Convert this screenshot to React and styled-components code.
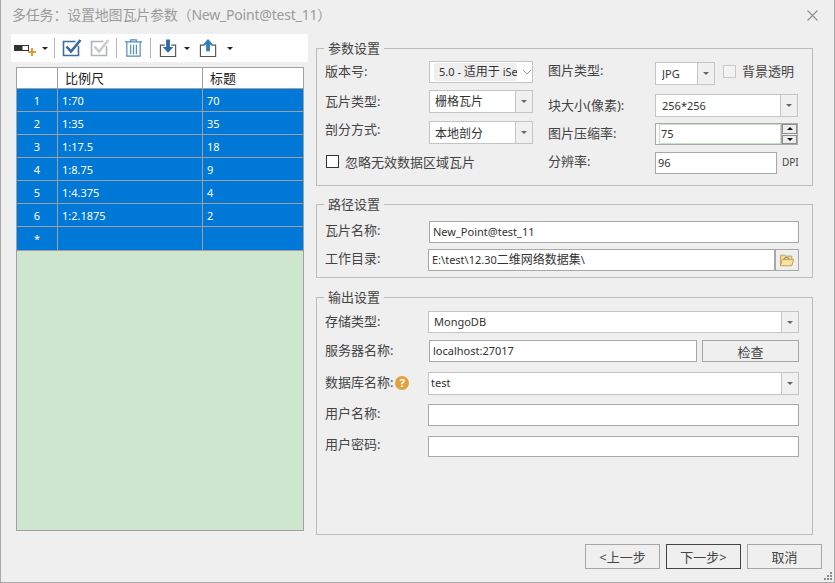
import React from 'react';
import styled, { createGlobalStyle } from 'styled-components';

const GlobalStyle = createGlobalStyle`
  html, body {
    margin: 0;
    padding: 0;
    background: #efefef;
  }
  * {
    box-sizing: border-box;
  }
`;

const Window = styled.div`
  width: 835px;
  height: 583px;
  background: #efefef;
  border: 1px solid #a8a8a8;
  border-top: none;
  position: relative;
  font-family: "Noto Sans", "Noto Sans CJK SC", sans-serif;
  font-size: 12px;
  color: #444;
  overflow: hidden;
`;

const TitleBar = styled.div`
  height: 33px;
  padding: 5px 15px 0 11px;
  display: flex;
  justify-content: space-between;
  align-items: flex-start;
`;

const Title = styled.div`
  font-size: 14px;
  line-height: 20px;
  letter-spacing: -0.2px;
  color: #9b9b9b;
`;

const CloseIcon = styled.svg`
  width: 13px;
  height: 13px;
  margin-top: 4px;
  stroke: #8c8c8c;
  stroke-width: 1.1;
  fill: none;
`;

const Body = styled.div`
  display: flex;
  align-items: flex-start;
`;

const LeftPane = styled.div`
  width: 315px;
  padding: 1px 0 0 10px;
`;

const Toolbar = styled.div`
  width: 297px;
  height: 28px;
  background: #fff;
  border-radius: 2px;
  display: flex;
  align-items: center;
  padding-left: 3px;
`;

const ToolIcon = styled.svg`
  width: ${(p) => p.$w || 20}px;
  height: 22px;
  display: block;
`;

const ToolGap = styled.span`
  width: ${(p) => p.$w}px;
`;

const Caret = styled.span`
  width: 0;
  height: 0;
  border-left: 3px solid transparent;
  border-right: 3px solid transparent;
  border-top: 3px solid #222;
  margin-left: ${(p) => p.$ml || 5}px;
  margin-top: 1px;
`;

const ToolSep = styled.span`
  width: 1px;
  height: 20px;
  background: #b5b5b5;
  margin: 0 ${(p) => p.$r || 7}px 0 ${(p) => p.$l || 7}px;
`;

const Grid = styled.div`
  width: 288px;
  height: 464px;
  margin: 5px 0 0 5px;
  border: 1px solid #a0a0a0;
  background: #cde6cd;
`;

const GridRow = styled.div`
  display: grid;
  grid-template-columns: 40px 145px 1fr;
  height: ${(p) => (p.$head ? 20 : 23)}px;
  background: ${(p) => (p.$head ? '#fff' : '#0078d7')};
  color: ${(p) => (p.$head ? '#222' : '#fff')};
  border-top: ${(p) => (p.$head ? 'none' : '1px solid #a0a0a0')};
  border-bottom: ${(p) => (p.$last ? '1px solid #a0a0a0' : 'none')};
  box-sizing: ${(p) => (p.$last ? 'content-box' : 'border-box')};
`;

const GridCell = styled.div`
  border-left: ${(p) => (p.$first ? 'none' : '1px solid #a0a0a0')};
  padding-left: ${(p) => (p.$center ? 0 : p.$head ? 7 : 4)}px;
  text-align: ${(p) => (p.$center ? 'center' : 'left')};
  line-height: ${(p) => (p.$head ? 20 : 23)}px;
  font-size: ${(p) => (p.$head ? 13 : 11)}px;
  white-space: nowrap;
`;

const RightPane = styled.div`
  width: 497px;
  margin-top: 6px;
`;

const Group = styled.fieldset`
  height: ${(p) => p.$h}px;
  margin: ${(p) => p.$mt || 0}px 0 0;
  padding: 0 13px 0 8px;
  border: 1px solid #bcbcbc;
  min-width: 0;
`;

const Legend = styled.legend`
  margin-left: -1px;
  padding: 0 4px;
  font-size: 13px;
  line-height: 18px;
  color: #444;
`;

const ParamColumns = styled.div`
  display: flex;
  margin-top: 4px;
`;

const ParamColumn = styled.div`
  width: ${(p) => p.$w}px;
  margin-left: ${(p) => p.$ml || 0}px;
  margin-top: ${(p) => p.$mt || 0}px;
`;

const Row = styled.div`
  display: flex;
  align-items: center;
  height: ${(p) => p.$h || 23}px;
  margin-top: ${(p) => p.$mt || 0}px;
`;

const Label = styled.label`
  flex: 0 0 ${(p) => p.$w || 104}px;
  font-size: 13px;
  color: #444;
  white-space: nowrap;
  display: flex;
  align-items: center;
  margin-bottom: ${(p) => (p.$lift || 0) * 2}px;
`;

const Field = styled.div`
  width: ${(p) => (p.$w ? `${p.$w}px` : '100%')};
  flex: ${(p) => (p.$w ? 'none' : 1)};
  min-width: 0;
  height: ${(p) => p.$h || 22}px;
  background: #fff;
  border: 1px solid ${(p) => p.$border || '#b4b4b4'};
  display: flex;
  align-items: center;
  padding-left: ${(p) => p.$pl || 3}px;
  padding-bottom: ${(p) => p.$pb || 0}px;
  font-size: 11px;
  color: #333;
  white-space: nowrap;
  overflow: hidden;
`;

const Cjk = styled.span`
  font-size: 12px;
`;

const FieldText = styled.span`
  flex: 1;
  min-width: 0;
  padding-bottom: ${(p) => p.$pb || 0}px;
  overflow: hidden;
`;

const FocusedText = styled.span`
  flex: 1;
  align-self: stretch;
  border: 1px solid #c6e2c6;
  padding-left: 1px;
  line-height: 18px;
`;

const DropArrow = styled.span`
  flex: 0 0 17px;
  align-self: stretch;
  background: #f0f0f0;
  border-left: 1px solid #c4c4c4;
  display: flex;
  align-items: center;
  justify-content: center;
  &::after {
    content: '';
    border-left: 3px solid transparent;
    border-right: 3px solid transparent;
    border-top: 3px solid #666;
  }
`;

const DisabledText = styled.span`
  background: #efefef;
  align-self: stretch;
  margin: 1px 0 1px 1px;
  padding-left: 5px;
  width: 83px;
  line-height: 18px;
  overflow: hidden;
`;

const Chevron = styled.svg`
  width: 10px;
  height: 6px;
  margin-left: 5px;
  stroke: #9a9a9a;
  fill: none;
`;

const Spinner = styled.div`
  flex: 0 0 16px;
  align-self: stretch;
  background: #ececec;
  border-left: 1px solid #a8a8a8;
  display: flex;
  flex-direction: column;
`;

const SpinPart = styled.span`
  flex: 1;
  border: 1px solid #8f8f8f;
  margin: ${(p) => (p.$down ? '0' : '0 0 1px')};
  display: flex;
  align-items: center;
  justify-content: center;
  &::after {
    content: '';
    border-left: 3px solid transparent;
    border-right: 3px solid transparent;
    ${(p) => (p.$down ? 'border-top: 3px solid #111;' : 'border-bottom: 3px solid #111;')}
  }
`;

const Box = styled.span`
  width: 13px;
  height: 13px;
  background: ${(p) => (p.$muted ? '#f3f3f3' : '#fff')};
  border: 1px solid ${(p) => (p.$muted ? '#c8c8c8' : '#333')};
  flex: none;
  margin-left: ${(p) => p.$ml || 0}px;
  margin-bottom: ${(p) => (p.$lift || 0) * 2}px;
`;

const CheckText = styled.span`
  font-size: 13px;
  margin-left: ${(p) => p.$ml || 6}px;
  margin-bottom: ${(p) => (p.$lift || 0) * 2}px;
  color: #444;
`;

const Unit = styled.span`
  font-size: 10px;
  margin: 0 0 3px 5px;
  color: #444;
`;

const GroupBody = styled.div`
  margin-top: ${(p) => p.$mt || 0}px;
`;

const Button = styled.button`
  width: ${(p) => p.$w || 75}px;
  height: ${(p) => p.$h || 25}px;
  margin-left: ${(p) => p.$ml || 0}px;
  background: #efefef;
  border: 1px solid ${(p) => (p.$primary ? '#444' : '#a6a6a6')};
  font-family: inherit;
  font-size: 13px;
  color: #444;
  padding: 0;
`;

const FolderButton = styled.span`
  width: 24px;
  height: 22px;
  border: 1px solid #a8a8a8;
  display: flex;
  align-items: center;
  justify-content: center;
  flex: none;
`;

const HelpDot = styled.span`
  width: 14px;
  height: 14px;
  margin: 2px 0 0 2px;
  border-radius: 50%;
  background: #e0a33a;
  color: #fff;
  font-size: 11px;
  font-weight: 700;
  line-height: 14px;
  text-align: center;
`;

const Footer = styled.div`
  display: flex;
  justify-content: flex-end;
  padding-right: 12px;
  margin-top: 9px;
`;

const Grip = styled.svg`
  position: absolute;
  right: 1px;
  bottom: 1px;
  width: 9px;
  height: 9px;
  fill: #8a8a8a;
`;

const rows = [
  ['1', '1:70', '70'],
  ['2', '1:35', '35'],
  ['3', '1:17.5', '18'],
  ['4', '1:8.75', '9'],
  ['5', '1:4.375', '4'],
  ['6', '1:2.1875', '2'],
  ['*', '', ''],
];

const CheckAll = ({ color, box }) => (
  <ToolIcon viewBox="0 0 20 22" $w={20}>
    <path d="M13.5 4.5H1.5v14h15V9" fill="none" stroke={box} strokeWidth="1.6" />
    <path d="M4.5 9.5l4.5 5L18.5 3" fill="none" stroke={color} strokeWidth="2.6" />
  </ToolIcon>
);

const Trash = () => (
  <ToolIcon viewBox="0 0 20 22" $w={19}>
    <path d="M1 4.5h18M7 4.5V2.5h6v2M3 4.5v15h14v-15M7 7.5v10M10 7.5v10M13 7.5v10" fill="none" stroke="#4a8ac0" strokeWidth="1.2" />
  </ToolIcon>
);

const TrayArrow = ({ up }) => (
  <ToolIcon viewBox="0 0 20 22" $w={19}>
    <path d="M6 8H1.5v12h16V8H13" fill="none" stroke="#555" strokeWidth="1.2" />
    {up ? (
      <path d="M9.5 1.5l5.5 6h-3.5v7h-4v-7H4z" fill="#2f7ec0" />
    ) : (
      <path d="M9.5 16l5.5-6h-3.5V2h-4v8H4z" fill="#2f6aa8" />
    )}
  </ToolIcon>
);

const AddField = () => (
  <ToolIcon viewBox="0 0 24 22" $w={24}>
    <rect x="0.5" y="8.5" width="14" height="5" fill="#fff" stroke="#333" strokeWidth="1" />
    <rect x="0.5" y="8.5" width="8" height="5" fill="#333" />
    <path d="M18 11v8M14 15h8" stroke="#e8973a" strokeWidth="2" />
  </ToolIcon>
);

const FolderIcon = () => (
  <svg width="16" height="14" viewBox="0 0 17 16">
    <path d="M1 2.5h5l1 1h7v10H1z" fill="#f6d98c" stroke="#b99a52" strokeWidth="1" />
    <path d="M1 14.5l2-7h13l-2 7z" fill="#fae39f" stroke="#b99a52" strokeWidth="1" />
    <path d="M5 6.5c1.5-2 4-2 6 0" fill="none" stroke="#4a6fa5" strokeWidth="1" />
  </svg>
);

const ComboBox = ({ w, h, text, pl, pb }) => (
  <Field $w={w} $h={h} $border="#c4c4c4" $pl={pl || 5}>
    <FieldText $pb={pb}>{text}</FieldText>
    <DropArrow />
  </Field>
);

export default function App() {
  return (
    <>
      <GlobalStyle />
      <Window>
        <TitleBar>
          <Title>多任务：设置地图瓦片参数（New_Point@test_11）</Title>
          <CloseIcon viewBox="0 0 13 13">
            <path d="M1.5 1.5l10 10M11.5 1.5l-10 10" />
          </CloseIcon>
        </TitleBar>
        <Body>
          <LeftPane>
            <Toolbar>
              <AddField />
              <Caret $ml={4} />
              <ToolSep $l={6} $r={7} />
              <CheckAll color="#2f6aa8" box="#3a6f9e" />
              <ToolGap $w={8} />
              <CheckAll color="#c8ccd0" box="#b0b4b8" />
              <ToolSep $l={6} $r={7} />
              <Trash />
              <ToolSep $l={7} $r={8} />
              <TrayArrow />
              <Caret $ml={6} />
              <ToolGap $w={9} />
              <TrayArrow up />
              <Caret $ml={9} />
            </Toolbar>
            <Grid>
              <GridRow $head>
                <GridCell $first $head />
                <GridCell $head>比例尺</GridCell>
                <GridCell $head>标题</GridCell>
              </GridRow>
              {rows.map(([no, scale, title], i) => (
                <GridRow key={no} $last={i === rows.length - 1}>
                  <GridCell $first $center>{no}</GridCell>
                  <GridCell>{scale}</GridCell>
                  <GridCell>{title}</GridCell>
                </GridRow>
              ))}
            </Grid>
          </LeftPane>
          <RightPane>
            <Group $h={147}>
              <Legend>参数设置</Legend>
              <ParamColumns>
                <ParamColumn $w={208}>
                  <Row $h={22}>
                    <Label $lift={2}>版本号:</Label>
                    <Field $w={104} $border="#c4c4c4" $pl={0}>
                      <DisabledText>5.0 - <Cjk>适用于</Cjk> iSe</DisabledText>
                      <Chevron viewBox="0 0 10 6"><path d="M1 1l4 4 4-4" /></Chevron>
                    </Field>
                  </Row>
                  <Row $mt={7}>
                    <Label $lift={1}>瓦片类型:</Label>
                    <ComboBox w={104} h={23} pb={2} text={<Cjk>栅格瓦片</Cjk>} />
                  </Row>
                  <Row $mt={8}>
                    <Label $lift={4}>剖分方式:</Label>
                    <ComboBox w={104} h={23} text={<Cjk>本地剖分</Cjk>} />
                  </Row>
                  <Row $mt={6} $h={22}>
                    <Box $ml={1} />
                    <CheckText>忽略无效数据区域瓦片</CheckText>
                  </Row>
                </ParamColumn>
                <ParamColumn $w={250} $ml={15} $mt={1}>
                  <Row>
                    <Label $w={107} $lift={4}>图片类型:</Label>
                    <ComboBox w={60} h={23} text="JPG" pl={6} />
                    <Box $muted $ml={8} $lift={2} />
                    <CheckText $ml={6} $lift={3}>背景透明</CheckText>
                  </Row>
                  <Row $mt={9}>
                    <Label $w={107} $lift={1}>块大小(像素):</Label>
                    <ComboBox w={143} h={23} text="256*256" pl={6} />
                  </Row>
                  <Row $mt={6} $h={22}>
                    <Label $w={107} $lift={2}>图片压缩率:</Label>
                    <Field $w={143} $border="#a8a8a8" $pl={0}>
                      <FocusedText>75</FocusedText>
                      <Spinner>
                        <SpinPart />
                        <SpinPart $down />
                      </Spinner>
                    </Field>
                  </Row>
                  <Row $mt={7} $h={22}>
                    <Label $w={107} $lift={3}>分辨率:</Label>
                    <Field $w={122} $border="#a8a8a8" $pl={2} $pb={2}>96</Field>
                    <Unit>DPI</Unit>
                  </Row>
                </ParamColumn>
              </ParamColumns>
            </Group>
            <Group $h={83} $mt={9}>
              <Legend>路径设置</Legend>
              <GroupBody $mt={8}>
                <Row $h={22}>
                  <Label $lift={3}>瓦片名称:</Label>
                  <Field $border="#a8a8a8" $pb={2}>New_Point@test_11</Field>
                </Row>
                <Row $h={22} $mt={6}>
                  <Label $w={103} $lift={3}>工作目录:</Label>
                  <Field $border="#a8a8a8" $pb={2}>E:\test\12.30<Cjk>二维网络数据集</Cjk>\</Field>
                  <FolderButton><FolderIcon /></FolderButton>
                </Row>
              </GroupBody>
            </Group>
            <Group $h={247} $mt={10}>
              <Legend>输出设置</Legend>
              <GroupBody $mt={5}>
                <Row $h={22}>
                  <Label $w={103} $lift={2}>存储类型:</Label>
                  <ComboBox text="MongoDB" pl={5} pb={2} />
                </Row>
                <Row $h={22} $mt={7}>
                  <Label $lift={2}>服务器名称:</Label>
                  <Field $w={268} $border="#a8a8a8" $pb={2}>localhost:27017</Field>
                  <Button $w={97} $h={22} $ml={5}>检查</Button>
                </Row>
                <Row $mt={10}>
                  <Label $w={103} $lift={2}>数据库名称:<HelpDot>?</HelpDot></Label>
                  <ComboBox h={23} text="test" pl={2} pb={2} />
                </Row>
                <Row $h={22} $mt={9}>
                  <Label $w={103} $lift={3}>用户名称:</Label>
                  <Field $border="#a8a8a8" />
                </Row>
                <Row $h={21} $mt={10}>
                  <Label $w={103} $lift={3}>用户密码:</Label>
                  <Field $h={21} $border="#a8a8a8" />
                </Row>
              </GroupBody>
            </Group>
          </RightPane>
        </Body>
        <Footer>
          <Button>&lt;上一步</Button>
          <Button $primary $ml={6}>下一步&gt;</Button>
          <Button $ml={6}>取消</Button>
        </Footer>
        <Grip viewBox="0 0 9 9">
          <rect x="6" y="0" width="2" height="2" />
          <rect x="3" y="3" width="2" height="2" />
          <rect x="6" y="3" width="2" height="2" />
          <rect x="0" y="6" width="2" height="2" />
          <rect x="3" y="6" width="2" height="2" />
          <rect x="6" y="6" width="2" height="2" />
        </Grip>
      </Window>
    </>
  );
}
